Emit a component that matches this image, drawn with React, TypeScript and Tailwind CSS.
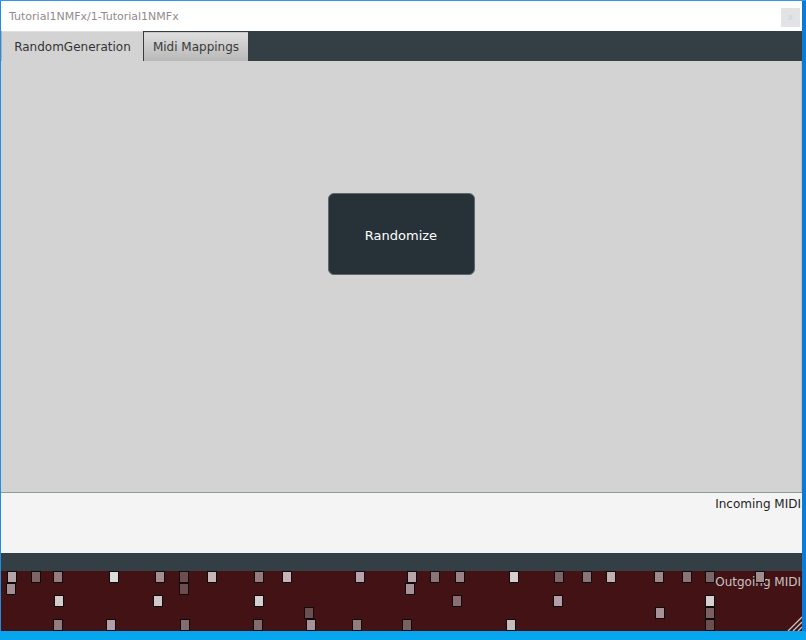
import React from "react";

type Sq = [number, number, string];

const squares: Sq[] = [
  // row 0
  [7, 0, "#b3a5aa"], [31, 0, "#7d6466"], [53, 0, "#957b7d"], [109, 0, "#dcdcdc"],
  [155, 0, "#a48e92"], [179, 0, "#6e4d50"], [207, 0, "#c7b5b8"], [254, 0, "#957b7d"],
  [282, 0, "#c8b4b8"], [355, 0, "#b9a2ad"], [407, 0, "#b6a5a9"], [430, 0, "#8b7376"],
  [455, 0, "#9a8386"], [509, 0, "#d6cfd0"], [554, 0, "#7d6466"], [582, 0, "#8c7376"],
  [606, 0, "#c2afb1"], [654, 0, "#9f888b"], [682, 0, "#8c7376"], [705, 0, "#7d6466"],
  [755, 0, "#a08c8d"],
  // row 1
  [6, 1, "#a48e92"], [179, 1, "#6e4d50"], [405, 1, "#a89297"],
  // row 2
  [54, 2, "#d5cbc8"], [153, 2, "#d1c7c8"], [254, 2, "#d6cfd0"], [452, 2, "#8a6f72"],
  [553, 2, "#b49fa8"], [705, 2, "#d6d0d0"],
  // row 3
  [304, 3, "#6e4d50"], [655, 3, "#a89297"], [705, 3, "#7b6062"],
  // row 4
  [53, 4, "#957b7d"], [106, 4, "#b49fa8"], [180, 4, "#866c6e"], [253, 4, "#846c6e"],
  [306, 4, "#a89297"], [352, 4, "#957b7d"], [402, 4, "#7b6062"], [506, 4, "#c8bbbc"],
  [705, 4, "#6e4d50"],
];

const font = { fontFamily: '"DejaVu Sans", Verdana, sans-serif' };

export default function App() {
  return (
    <div className="w-[806px] h-[640px] flex flex-col bg-[#0aa3ee] overflow-hidden" style={font}>
      <div className="h-px bg-[#3597e6]" />
      <div className="flex h-[630px]">
        <div className="w-px bg-[#1c8ee8]" />
        <div className="w-[801px] flex flex-col bg-[#d3d3d3]">
          {/* title bar */}
          <div className="h-[30px] bg-white flex items-center justify-between pl-[8px] pr-[2px]">
            <span className="text-[11px] text-[#948a8c] leading-none">Tutorial1NMFx/1-Tutorial1NMFx</span>
            <div className="w-[19px] h-[19px] bg-[#e1e3e5] flex items-center justify-center mt-[2px]">
              <span className="text-[9px] leading-none text-[#cfdbe4] font-bold">x</span>
            </div>
          </div>
          {/* tab bar */}
          <div className="h-[30px] bg-[#343e45] flex">
            <div className="w-px bg-[#b0b0b0]" />
            <div className="w-[141px] bg-[#d3d3d3] border-t border-[#e0e0e0] flex items-center justify-center">
              <span className="text-[12px] text-[#333] leading-none">RandomGeneration</span>
            </div>
            <div className="w-px bg-[#3a3a3a]" />
            <div className="w-[104px] mt-px bg-gradient-to-b from-[#dedede] to-[#b8b8b8] border-t border-[#c8c8c8] flex items-center justify-center">
              <span className="text-[12px] text-[#3a3a3a] leading-none">Midi Mappings</span>
            </div>
          </div>
          {/* content */}
          <div className="h-[431px] bg-[#d3d3d3] flex justify-center border-r border-[#bdbdbd]">
            <button className="mt-[132px] w-[147px] h-[82px] pt-[3px] rounded-[6px] bg-[#263238] border border-[#5e676b] text-white text-[13px] flex items-center justify-center">
              Randomize
            </button>
          </div>
          <div className="h-px bg-[#8f9b9b]" />
          {/* incoming */}
          <div className="h-[60px] bg-[#f4f4f4] flex justify-end items-start">
            <span className="text-[12px] text-[#1e1e1e] leading-none mt-[5px] mr-[1px]">Incoming MIDI</span>
          </div>
          <div className="h-[18px] bg-[#343e45]" />
          {/* outgoing */}
          <div className="h-[60px] bg-[#421214] relative overflow-hidden">
            <div className="flex justify-end">
              <span className="text-[12px] text-[#c9c2c2] leading-none mt-[5px] mr-[1px]">Outgoing MIDI</span>
            </div>
            {squares.map(([x, r, c], i) => (
              <div
                key={i}
                className="absolute w-[10px] h-[12px] border border-[#0d0b0b]"
                style={{ left: x - 1, top: r * 12, backgroundColor: c }}
              />
            ))}
            <svg className="absolute right-0 bottom-0" width="18" height="18" viewBox="0 0 18 18">
              <line x1="18" y1="4" x2="4" y2="18" stroke="#c8c4c4" strokeWidth="1.3" />
              <line x1="18" y1="9" x2="9" y2="18" stroke="#c8c4c4" strokeWidth="1.3" />
              <line x1="18" y1="14" x2="14" y2="18" stroke="#c8c4c4" strokeWidth="1.3" />
            </svg>
          </div>
        </div>
        <div className="flex-1 bg-[#0c7bd6]" />
      </div>
      <div className="flex-1 bg-gradient-to-b from-[#0aa3ee] to-[#04a8f0]" />
    </div>
  );
}
